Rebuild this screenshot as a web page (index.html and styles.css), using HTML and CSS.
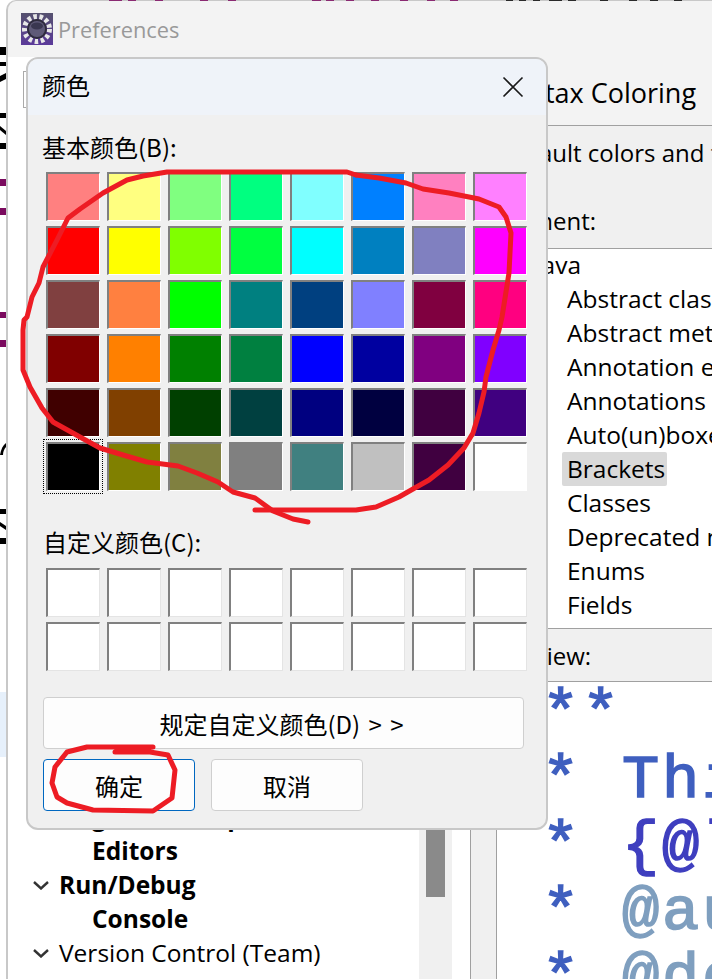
FILE: index.html
```html
<!DOCTYPE html>
<html lang="en">
<head>
<meta charset="utf-8">
<title>Preferences</title>
<link rel="stylesheet" href="styles.css">
</head>
<body>
<div class="screen">
  <div class="window">
    <header class="titlebar">
      <svg class="app-icon" width="32" height="32" viewBox="0 0 32 32">
        <defs><linearGradient id="ig" x1="0" y1="0" x2="0" y2="1"><stop offset="0" stop-color="#55516e"/><stop offset="1" stop-color="#5b3a9a"/></linearGradient></defs>
        <rect width="32" height="32" fill="url(#ig)"/>
        <circle cx="16" cy="16" r="12.5" fill="none" stroke="#e8e8e8" stroke-width="5" stroke-dasharray="3.5 2.6"/>
        <circle cx="16" cy="16" r="10" fill="#2e2b3c"/>
        <circle cx="16" cy="16" r="8" fill="#5f5a78"/>
        <ellipse cx="16" cy="13" rx="6" ry="3.5" fill="#3a3750"/>
      </svg>
      <span class="window-title">Preferences</span>
    </header>
    <div class="panes">
      <aside class="nav">
        <div class="nav-main">
          <div class="search"></div>
          <ul class="nav-tree">
            <li class="nav-row bold indent">global Setup</li>
            <li class="nav-row bold indent">Editors</li>
            <li class="nav-row bold"><svg class="chev" width="16" height="9" viewBox="0 0 16 9"><path d="M1 1l7 6.500L15 1" fill="none" stroke="#333" stroke-width="2.400"/></svg>Run/Debug</li>
            <li class="nav-row bold indent">Console</li>
            <li class="nav-row"><svg class="chev" width="16" height="9" viewBox="0 0 16 9"><path d="M1 1l7 6.500L15 1" fill="none" stroke="#333" stroke-width="2.400"/></svg>Version Control (Team)</li>
            <li class="nav-row indent">Git</li>
          </ul>
        </div>
        <div class="scrollbar"><div class="thumb"></div></div>
      </aside>
      <div class="gutter-white"></div>
      <div class="gutter-grey"></div>
      <main class="page">
        <h1 class="page-title">Syntax Coloring</h1>
        <p class="desc">Default colors and font styles</p>
        <p class="label">Element:</p>
        <ul class="elements">
          <li class="el-row el-root">Java</li>
          <li class="el-row">Abstract classes</li>
          <li class="el-row">Abstract methods</li>
          <li class="el-row">Annotation elements</li>
          <li class="el-row">Annotations</li>
          <li class="el-row">Auto(un)boxed</li>
          <li class="el-row"><span class="selected">Brackets</span></li>
          <li class="el-row">Classes</li>
          <li class="el-row">Deprecated members</li>
          <li class="el-row">Enums</li>
          <li class="el-row">Fields</li>
        </ul>
        <p class="label label-preview">Preview:</p>
        <pre class="code"><span class="c-doc">/**</span>
<span class="c-doc"> * This</span>
<span class="c-doc"> * </span><span class="c-link">{@l</span>
<span class="c-doc"> * </span><span class="c-tag">@au</span>
<span class="c-doc"> * </span><span class="c-tag">@de</span></pre>
      </main>
    </div>
  </div>

  <svg class="fragments" width="712" height="979" viewBox="0 0 712 979">
    <g fill="#000">
      <rect x="0" y="47" width="6" height="8"/><rect x="0" y="62" width="6" height="4"/>
      <path d="M0 76l6-3v6l-6 3z"/><rect x="0" y="113" width="6" height="5"/>
      <path d="M0 126l6 5v4l-6-5z"/><rect x="0" y="143" width="6" height="6"/>
      <path d="M0 455c1-6 3-10 6-12v4c-2 2-3 5-3 8z"/><rect x="0" y="509" width="6" height="5"/>
      <path d="M0 522l6 4v4l-6-4z"/><rect x="0" y="538" width="6" height="6"/>
    </g>
    <g fill="#7a0a5e">
      <rect x="0" y="179" width="6" height="7"/><rect x="0" y="208" width="6" height="7"/>
      <rect x="0" y="312" width="6" height="6"/><rect x="0" y="340" width="6" height="7"/>
    </g>
    <rect x="0" y="692" width="6" height="65" fill="#e6f0fb"/>
    <g fill="#8a2a72">
      <rect x="109" y="0" width="13" height="1"/><rect x="128" y="0" width="8" height="1"/><rect x="155" y="0" width="8" height="1"/>
      <rect x="200" y="0" width="8" height="1"/><rect x="228" y="0" width="8" height="1"/><rect x="312" y="0" width="9" height="1"/>
      <rect x="326" y="0" width="8" height="1"/><rect x="346" y="0" width="8" height="1"/><rect x="371" y="0" width="8" height="1"/>
      <rect x="400" y="0" width="8" height="1"/><rect x="427" y="0" width="8" height="1"/><rect x="450" y="0" width="8" height="1"/>
    </g>
    <g fill="#2a2a2a">
      <rect x="506" y="0" width="7" height="1"/><rect x="519" y="0" width="7" height="1"/><rect x="533" y="0" width="7" height="1"/>
      <rect x="549" y="0" width="13" height="1"/><rect x="568" y="0" width="8" height="1"/><rect x="600" y="0" width="8" height="1"/>
      <rect x="629" y="0" width="8" height="1"/><rect x="650" y="0" width="8" height="1"/><rect x="674" y="0" width="8" height="1"/>
    </g>
  </svg>

  <section class="dialog">
    <header class="dialog-head">
      <span class="dialog-title">颜色</span>
      <svg class="close" width="22" height="22" viewBox="0 0 22 22"><path d="M1.500 1.500l19 19M20.500 1.500l-19 19" fill="none" stroke="#1a1a1a" stroke-width="1.600"/></svg>
    </header>
    <div class="dialog-body">
      <div class="group-label">基本颜色(B):</div>
      <div class="swatches">
        <i class="sw c-ff8080"></i><i class="sw c-ffff80"></i><i class="sw c-80ff80"></i><i class="sw c-00ff80"></i><i class="sw c-80ffff"></i><i class="sw c-0080ff"></i><i class="sw c-ff80c0"></i><i class="sw c-ff80ff"></i>
        <i class="sw c-ff0000"></i><i class="sw c-ffff00"></i><i class="sw c-80ff00"></i><i class="sw c-00ff40"></i><i class="sw c-00ffff"></i><i class="sw c-0080c0"></i><i class="sw c-8080c0"></i><i class="sw c-ff00ff"></i>
        <i class="sw c-804040"></i><i class="sw c-ff8040"></i><i class="sw c-00ff00"></i><i class="sw c-008080"></i><i class="sw c-004080"></i><i class="sw c-8080ff"></i><i class="sw c-800040"></i><i class="sw c-ff0080"></i>
        <i class="sw c-800000"></i><i class="sw c-ff8000"></i><i class="sw c-008000"></i><i class="sw c-008040"></i><i class="sw c-0000ff"></i><i class="sw c-0000a0"></i><i class="sw c-800080"></i><i class="sw c-8000ff"></i>
        <i class="sw c-400000"></i><i class="sw c-804000"></i><i class="sw c-004000"></i><i class="sw c-004040"></i><i class="sw c-000080"></i><i class="sw c-000040"></i><i class="sw c-400040"></i><i class="sw c-400080"></i>
        <i class="sw c-000000 sw-current"></i><i class="sw c-808000"></i><i class="sw c-808040"></i><i class="sw c-808080"></i><i class="sw c-408080"></i><i class="sw c-c0c0c0"></i><i class="sw c-400040"></i><i class="sw c-ffffff"></i>
      </div>
      <div class="group-label group-label-custom">自定义颜色(C):</div>
      <div class="swatches swatches-custom">
        <i class="sw"></i><i class="sw"></i><i class="sw"></i><i class="sw"></i><i class="sw"></i><i class="sw"></i><i class="sw"></i><i class="sw"></i>
        <i class="sw"></i><i class="sw"></i><i class="sw"></i><i class="sw"></i><i class="sw"></i><i class="sw"></i><i class="sw"></i><i class="sw"></i>
      </div>
      <button class="btn btn-wide">规定自定义颜色(D) &gt; &gt;</button>
      <div class="btn-row">
        <button class="btn btn-default">确定</button>
        <button class="btn">取消</button>
      </div>
    </div>
  </section>

  <svg class="ink" width="712" height="979" viewBox="0 0 712 979">
    <path d="M356 175L347 172H167L143 176L127 180L103 193L80 209L68 218L57 240L43 267L39 283L32 297L27 317L24 320L23 330L23 370L30 387L42 408L53 422L80 437L100 448L123 455L147 462L178 466L197 473L218 482L233 492L255 498L273 511L293 519L308 522"/>
    <path d="M356 175L379 178L406 183L423 189L449 193L479 199L499 207L506 217L511 233L509 273L502 317L499 330L493 350L486 377L484 392L479 413L473 433L464 448L448 465L429 480L413 489L399 497L376 507L356 510H255"/>
    <path d="M153 747H87L67 752L55 767L52 783L57 797L67 803L93 810L153 811L172 798L175 770L168 755L150 752H115"/>
  </svg>
</div>
</body>
</html>
```

FILE: styles.css
```css
* { box-sizing: border-box; }
html, body { margin: 0; padding: 0; background: #fff; }
ul { list-style: none; margin: 0; padding: 0; }
p, h1 { margin: 0; }

.screen {
  position: relative;
  width: 712px;
  height: 979px;
  overflow: hidden;
  background: #fff;
  font-family: "Open Sans", "Noto Sans CJK SC", sans-serif;
  font-size: 24.5px;
  color: #000;
  padding-left: 6px;
}

/* Window behind the dialog */
.window {
  width: 720px;
  height: 979px;
  display: flex;
  flex-direction: column;
  border-left: 2px solid #c8c8c8;
  border-top: 1px solid #c8c8c8;
  border-top-left-radius: 10px;
  overflow: hidden;
  background: #f3f3f3;
}
.titlebar {
  height: 56px;
  flex: none;
  display: flex;
  align-items: center;
  gap: 5px;
  padding-left: 13px;
}
.app-icon { flex: none; }
.window-title { color: #999; font-size: 21.8px; }

.panes { flex: 1; display: flex; min-height: 0; }
.nav { width: 444px; flex: none; display: flex; background: #fff; }
.nav-main { width: 411px; flex: none; overflow: hidden; }
.search {
  margin: 14px 0 0 15px;
  width: 380px;
  height: 37px;
  border: 1px solid #aaa;
}
.nav-tree { margin-top: 692px; }
.nav-row {
  height: 34px;
  line-height: 34px;
  padding-left: 25px;
  white-space: nowrap;
  display: flex;
  align-items: center;
}
.nav-row.indent { padding-left: 84px; }
.nav-row.bold { font-weight: 700; }
.chev { margin-right: 10px; flex: none; }
.scrollbar { width: 33px; flex: none; background: #f0f0f0; padding-left: 7px; }
.thumb { width: 19px; height: 840px; background: #8a8a8a; }
.gutter-white { width: 19px; flex: none; background: #fff; border-right: 1px solid #a0a0a0; }
.gutter-grey { width: 26px; flex: none; background: #f0f0f0; border-right: 1px solid #a0a0a0; }

.page { flex: 1; min-width: 0; background: #f0f0f0; overflow: hidden; }
.page-title {
  height: 69px;
  line-height: 72px;
  font-size: 27px;
  font-weight: 400;
  padding-left: 3px;
  border-bottom: 1px solid #a0a0a0;
  background: #f3f3f3;
  white-space: nowrap;
}
.desc { height: 54px; line-height: 54px; padding-left: 3px; white-space: nowrap; font-size: 24px; }
.label { height: 68px; line-height: 82px; padding-left: 1px; white-space: nowrap; font-size: 24px; }
.elements {
  background: #fff;
  border-top: 1px solid #a0a0a0;
  border-bottom: 1px solid #a0a0a0;
  height: 381px;
  overflow: hidden;
}
.el-row { height: 34px; line-height: 34px; padding-left: 70px; white-space: nowrap; }
.el-root { padding-left: 38px; margin-top: -1px; }
.selected { display: inline-block; background: #d9d9d9; border-radius: 2px; padding: 0 2px 0 5px; margin-left: -5px; }
.label-preview { height: 52px; line-height: 54px; padding-left: 0; }
.code {
  margin: 0;
  height: 300px;
  background: #fff;
  border-top: 1px solid #a0a0a0;
  padding: 0 0 0 5px;
  font-family: "Liberation Mono", monospace;
  font-weight: 400;
  font-size: 62px;
  letter-spacing: 2.8px;
  -webkit-text-stroke: 1.6px currentColor;
  line-height: 66px;
  overflow: hidden;
  white-space: pre;
}
.c-doc { color: #3f5fbf; }
.c-link { color: #3f3fbf; }
.c-tag { color: #7f9fbf; }

/* Slivers of the window behind everything */
.fragments { position: absolute; left: 0; top: 0; pointer-events: none; }

/* Colour dialog */
.dialog {
  position: absolute;
  left: 26px;
  top: 57px;
  width: 522px;
  height: 773px;
  background: #f0f0f0;
  border: 2px solid #c8c8c8;
  border-radius: 12px;
  overflow: hidden;
  font-family: "Noto Sans CJK SC", "Noto Sans", sans-serif;
  font-size: 24px;
}
.dialog-head {
  height: 56px;
  background: #eff3f9;
  display: flex;
  align-items: center;
  justify-content: space-between;
  padding: 0 22px 0 14px;
}
.dialog-title { line-height: 52px; height: 52px; align-self: flex-start; }
.dialog-body { padding: 16px 0 0 14px; }
.group-label { height: 33px; line-height: 32px; }
.group-label-custom { margin-top: 35px; padding-left: 1px; }
.swatches {
  margin: 8px 0 0 4px;
  display: grid;
  grid-template-columns: repeat(8, 54px);
  grid-auto-rows: 49px;
  column-gap: 7px;
  row-gap: 5px;
}
.swatches-custom { margin-top: 9px; }
.sw {
  display: block;
  background: #fff;
  border-style: solid;
  border-width: 2px 1px 1px 2px;
  border-color: #808080 #fff #fff #808080;
}
.swatches-custom .sw { border-color: #808080 #e4e4e4 #e4e4e4 #808080; }
.sw-current { outline: 1px dotted #000; outline-offset: 2px; box-shadow: inset -2px -2px 0 #000; }
.btn {
  display: block;
  width: 152px;
  height: 52px;
  background: #fdfdfd;
  border: 1px solid #cfcfcf;
  border-radius: 4px;
  font: inherit;
  color: #000;
  padding: 0;
}
.btn-wide { width: 481px; margin-left: 1px; margin-top: 26px; padding-right: 4px; white-space: pre; word-spacing: 3px; }
.btn-row { display: flex; gap: 16px; margin-top: 10px; margin-left: 1px; }
.btn-default { border-color: #0067c0; }

.c-ff8080 { background: #ff8080; } .c-ffff80 { background: #ffff80; } .c-80ff80 { background: #80ff80; } .c-00ff80 { background: #00ff80; }
.c-80ffff { background: #80ffff; } .c-0080ff { background: #0080ff; } .c-ff80c0 { background: #ff80c0; } .c-ff80ff { background: #ff80ff; }
.c-ff0000 { background: #ff0000; } .c-ffff00 { background: #ffff00; } .c-80ff00 { background: #80ff00; } .c-00ff40 { background: #00ff40; }
.c-00ffff { background: #00ffff; } .c-0080c0 { background: #0080c0; } .c-8080c0 { background: #8080c0; } .c-ff00ff { background: #ff00ff; }
.c-804040 { background: #804040; } .c-ff8040 { background: #ff8040; } .c-00ff00 { background: #00ff00; } .c-008080 { background: #008080; }
.c-004080 { background: #004080; } .c-8080ff { background: #8080ff; } .c-800040 { background: #800040; } .c-ff0080 { background: #ff0080; }
.c-800000 { background: #800000; } .c-ff8000 { background: #ff8000; } .c-008000 { background: #008000; } .c-008040 { background: #008040; }
.c-0000ff { background: #0000ff; } .c-0000a0 { background: #0000a0; } .c-800080 { background: #800080; } .c-8000ff { background: #8000ff; }
.c-400000 { background: #400000; } .c-804000 { background: #804000; } .c-004000 { background: #004000; } .c-004040 { background: #004040; }
.c-000080 { background: #000080; } .c-000040 { background: #000040; } .c-400040 { background: #400040; } .c-400080 { background: #400080; }
.c-000000 { background: #000000; } .c-808000 { background: #808000; } .c-808040 { background: #808040; } .c-808080 { background: #808080; }
.c-408080 { background: #408080; } .c-c0c0c0 { background: #c0c0c0; } .c-ffffff { background: #ffffff; }

/* Red annotation strokes over the screenshot */
.ink { position: absolute; left: 0; top: 0; pointer-events: none; }
.ink path { fill: none; stroke: #ed1c24; stroke-width: 5; stroke-linejoin: round; stroke-linecap: round; }
```
